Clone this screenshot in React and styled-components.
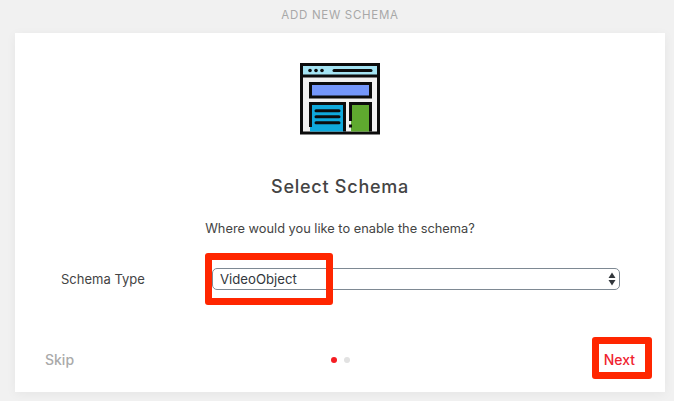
import React from "react";
import styled, { createGlobalStyle } from "styled-components";

const GlobalStyle = createGlobalStyle`
  html, body {
    margin: 0;
    padding: 0;
    background: #f1f1f1;
    font-family: Inter, "Liberation Sans", sans-serif;
  }
`;

const Page = styled.div`
  width: 674px;
  height: 401px;
  overflow: hidden;
  background: #f1f1f1;
  padding-left: 15px;
  box-sizing: border-box;
`;

const PageTitle = styled.div`
  width: 650px;
  height: 33px;
  line-height: 30px;
  text-align: center;
  font-size: 11.5px;
  letter-spacing: 0.7px;
  color: #a8a8a8;
  text-transform: uppercase;
`;

const Card = styled.div`
  width: 650px;
  height: 359px;
  background: #fff;
  box-shadow: 0 2px 10px rgba(0, 0, 0, 0.05);
  display: flex;
  flex-direction: column;
  align-items: center;
`;

const IconWrap = styled.div`
  margin-top: 30px;
  height: 72px;
`;

const Heading = styled.h2`
  margin: 40px 0 0;
  height: 24px;
  line-height: 24px;
  font-size: 18px;
  font-weight: 500;
  letter-spacing: 0.75px;
  color: #444;
`;

const Question = styled.p`
  margin: 21px 0 0;
  height: 18px;
  line-height: 18px;
  font-size: 12.8px;
  color: #444;
`;

const FieldRow = styled.div`
  align-self: stretch;
  margin-top: 30px;
  padding-left: 46px;
  display: flex;
  align-items: center;
  height: 22px;
`;

const FieldLabel = styled.label`
  width: 151px;
  font-size: 13px;
  color: #444;
`;

const SelectBox = styled.div`
  position: relative;
  width: 408px;
  height: 22px;
`;

const Select = styled.select`
  appearance: none;
  box-sizing: border-box;
  width: 100%;
  height: 100%;
  padding: 0 20px 0 7px;
  background: #fff;
  border: 1px solid #7e8993;
  border-radius: 5px;
  font-family: inherit;
  font-size: 13.2px;
  color: #32373c;
`;

const Arrows = styled.svg`
  position: absolute;
  right: 4px;
  top: 4px;
  pointer-events: none;
`;

const Highlight = styled.div`
  position: absolute;
  box-sizing: border-box;
  border: 7px solid #ff2600;
  border-radius: 3px;
  pointer-events: none;
  left: ${(p) => p.$left}px;
  top: ${(p) => p.$top}px;
  width: ${(p) => p.$width}px;
  height: ${(p) => p.$height}px;
`;

const Footer = styled.div`
  position: relative;
  align-self: stretch;
  margin-top: 58px;
  padding: 0 30px;
  height: 22px;
  display: flex;
  align-items: center;
  justify-content: space-between;
`;

const SkipLink = styled.a`
  font-size: 14px;
  font-weight: 500;
  color: #aaa;
`;

const NextLink = styled.a`
  font-size: 14px;
  font-weight: 500;
  color: #f0232f;
`;

const Dots = styled.div`
  display: flex;
  gap: 7px;
  margin: 2px 0 0 3px;
`;

const Dot = styled.span`
  width: 6px;
  height: 6px;
  border-radius: 50%;
  background: ${(p) => (p.$active ? "#f51d23" : "#e2e2e2")};
`;

const SchemaIcon = () => (
  <svg width="80" height="72" viewBox="0 0 80 72">
    <rect x="1.500" y="1.500" width="77" height="68.500" fill="#f1f1f1" stroke="#0c0c0c" strokeWidth="3" />
    <rect x="3" y="3" width="74" height="9" fill="#a5e4f3" />
    <path d="M3 13H77" stroke="#0c0c0c" strokeWidth="3" />
    <circle cx="10" cy="7.500" r="1.800" fill="#0c0c0c" />
    <circle cx="16" cy="7.500" r="1.800" fill="#0c0c0c" />
    <circle cx="22" cy="7.500" r="1.800" fill="#0c0c0c" />
    <path d="M34 7.500H71" stroke="#0c0c0c" strokeWidth="3" strokeLinecap="round" />
    <rect x="10.500" y="20.500" width="60" height="13.500" fill="#7497fb" stroke="#0c0c0c" strokeWidth="3" />
    <rect x="10" y="41" width="35" height="27.500" fill="#0fa9dc" />
    <path d="M10.500 64V40.500H44.500V68.500" fill="none" stroke="#0c0c0c" strokeWidth="3" />
    <path d="M16 47.700H39M16 53.700H39M16 59.700H39" stroke="#0c0c0c" strokeWidth="3" strokeLinecap="round" />
    <rect x="51" y="41" width="19" height="27.500" fill="#5fa92f" />
    <path d="M50.500 58V40.500H70.500V68.500" fill="none" stroke="#0c0c0c" strokeWidth="3" />
    <path d="M50.500 61.500V64.500" stroke="#0c0c0c" strokeWidth="3" />
  </svg>
);

const App = () => {
  return (
    <Page>
      <GlobalStyle />
      <PageTitle>Add New Schema</PageTitle>
      <Card>
        <IconWrap>
          <SchemaIcon />
        </IconWrap>
        <Heading>Select Schema</Heading>
        <Question>Where would you like to enable the schema?</Question>
        <FieldRow>
          <FieldLabel>Schema Type</FieldLabel>
          <SelectBox>
            <Select defaultValue="VideoObject">
              <option>VideoObject</option>
            </Select>
            <Arrows width="8" height="14" viewBox="0 0 8 14">
              <path d="M4 0.500L7.500 6H0.500Z M4 13.500L0.500 8H7.500Z" fill="#32373c" />
            </Arrows>
            <Highlight $left={-7} $top={-15} $width={128} $height={52} />
          </SelectBox>
        </FieldRow>
        <Footer>
          <SkipLink>Skip</SkipLink>
          <Dots>
            <Dot $active />
            <Dot />
          </Dots>
          <NextLink>Next</NextLink>
          <Highlight $left={577} $top={-11} $width={60} $height={42} />
        </Footer>
      </Card>
    </Page>
  );
};

export default App;
